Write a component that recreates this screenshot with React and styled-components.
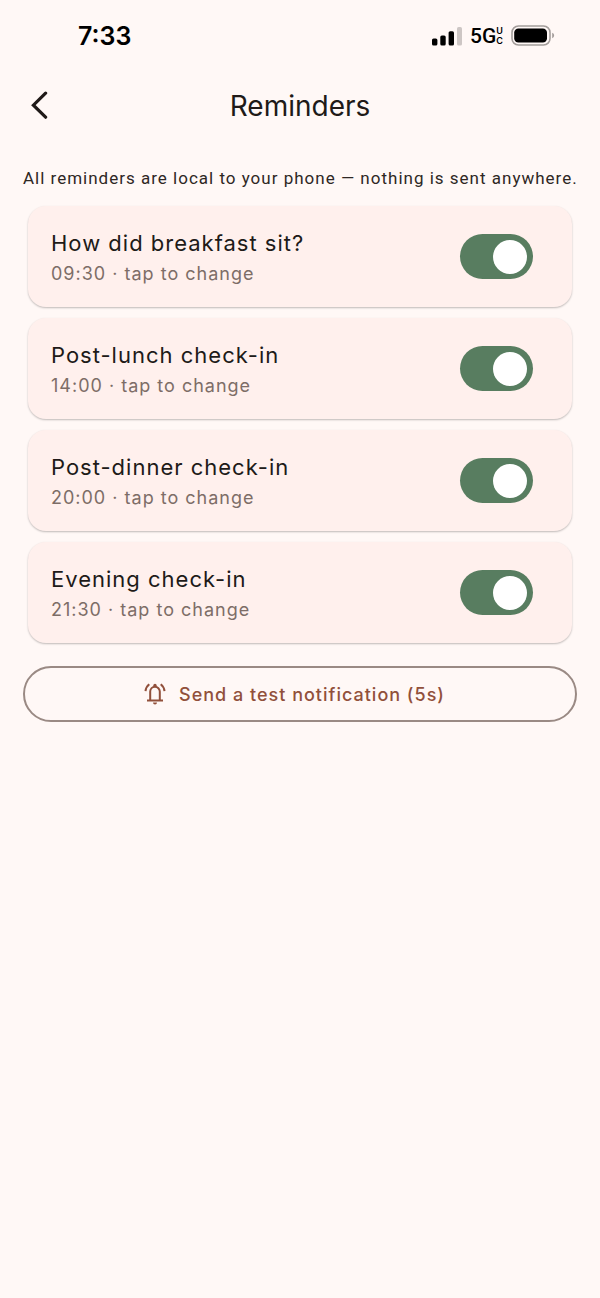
import { useState } from 'react';
import styled, { createGlobalStyle } from 'styled-components';

const initialReminders = [
  { id: 'breakfast', title: 'How did breakfast sit?', time: '09:30', enabled: true },
  { id: 'lunch', title: 'Post-lunch check-in', time: '14:00', enabled: true },
  { id: 'dinner', title: 'Post-dinner check-in', time: '20:00', enabled: true },
  { id: 'evening', title: 'Evening check-in', time: '21:30', enabled: true },
];

const SignalIcon = () => (
  <svg width="30" height="20" viewBox="0 0 30 20" aria-hidden="true">
    <rect x="0" y="12.5" width="5.4" height="7" rx="1.6" />
    <rect x="8.3" y="9.5" width="5.4" height="10" rx="1.6" />
    <rect x="16.6" y="5.2" width="5.4" height="14.3" rx="1.6" />
    <rect x="25" y="1" width="5" height="18.5" rx="1.6" fill="#cdc6c4" />
  </svg>
);

const BatteryIcon = () => (
  <svg width="44" height="22" viewBox="0 0 44 22" aria-hidden="true">
    <rect x="1" y="1" width="38" height="19" rx="6.5" fill="none" stroke="#a39d9b" strokeWidth="1.6" />
    <rect x="3.2" y="3.4" width="32.8" height="14.2" rx="4.2" />
    <path d="M41.2 7.8c1.2.5 1.9 1.5 1.9 2.7s-.7 2.2-1.9 2.7z" fill="#a39d9b" />
  </svg>
);

const BackIcon = () => (
  <svg width="18" height="30" viewBox="0 0 18 30" aria-hidden="true">
    <path
      d="M14.6 2.2 2.4 14.2l12.2 12"
      fill="none"
      stroke="#201a18"
      strokeWidth="3.2"
      strokeLinecap="round"
      strokeLinejoin="miter"
    />
  </svg>
);

const BellIcon = () => (
  <svg width="22" height="22" viewBox="0 0 22 22" aria-hidden="true">
    <g fill="none" stroke="currentColor" strokeWidth="2">
      <path d="M6.2 17V8.6a4.8 4.8 0 0 1 9.6 0V17" />
      <path d="M3 17.5h16" />
      <path d="M5.300 1.200C3.200 2.800 1.700 5.200 1.500 8.100M16.700 1.200c2.100 1.600 3.600 4 3.800 6.900" />
    </g>
    <circle cx="11" cy="2.500" r="1.700" fill="currentColor" />
    <path d="M9 19.400h4a2 2 0 0 1-4 0z" fill="currentColor" />
  </svg>
);

const ReminderCard = ({ reminder, onToggle }) => (
  <Card>
    <Details type="button">
      <ReminderTitle id={`${reminder.id}-title`}>{reminder.title}</ReminderTitle>
      <ReminderTime>{reminder.time} · tap to change</ReminderTime>
    </Details>
    <Switch
      type="checkbox"
      role="switch"
      aria-labelledby={`${reminder.id}-title`}
      checked={reminder.enabled}
      onChange={() => onToggle(reminder.id)}
    />
  </Card>
);

const App = () => {
  const [reminders, setReminders] = useState(initialReminders);

  const handleToggle = (id) => {
    setReminders((current) =>
      current.map((item) => (item.id === id ? { ...item, enabled: !item.enabled } : item))
    );
  };

  return (
    <>
      <GlobalStyle />
      <Screen>
        <StatusBar>
          <Clock>7:33</Clock>
          <StatusIcons>
            <SignalIcon />
            <Network>
              5G
              <NetworkSuffix>
                <span>U</span>
                <span>C</span>
              </NetworkSuffix>
            </Network>
            <BatteryIcon />
          </StatusIcons>
        </StatusBar>

        <AppBar>
          <BackButton type="button" aria-label="Back">
            <BackIcon />
          </BackButton>
          <PageTitle>Reminders</PageTitle>
        </AppBar>

        <Content>
          <Note>All reminders are local to your phone — nothing is sent anywhere.</Note>
          <ReminderList>
            {reminders.map((reminder) => (
              <ReminderCard key={reminder.id} reminder={reminder} onToggle={handleToggle} />
            ))}
          </ReminderList>
          <TestButton type="button">
            <BellIcon />
            Send a test notification (5s)
          </TestButton>
        </Content>
      </Screen>
    </>
  );
};

export default App;

// Styled Components
const GlobalStyle = createGlobalStyle`
  * {
    box-sizing: border-box;
  }

  body {
    margin: 0;
    background: #fff8f6;
    color: #201a18;
    font-family: Inter, "Liberation Sans", sans-serif;
  }

  button {
    padding: 0;
    border: none;
    background: none;
    color: inherit;
    font: inherit;
    cursor: pointer;
  }
`;

const Screen = styled.div`
  display: flex;
  flex-direction: column;
  min-height: 100vh;
`;

const StatusBar = styled.header`
  display: flex;
  align-items: center;
  justify-content: space-between;
  height: 72px;
  padding: 0 45px 0 78px;
  color: #000;
`;

const Clock = styled.span`
  font-size: 25px;
  font-weight: 600;
`;

const StatusIcons = styled.div`
  display: flex;
  align-items: center;
  gap: 8px;
`;

const Network = styled.span`
  display: flex;
  align-items: center;
  font-family: Roboto, sans-serif;
  font-size: 21px;
  font-weight: 500;
  line-height: 22px;
`;

const NetworkSuffix = styled.span`
  display: flex;
  flex-direction: column;
  font-family: Inter, sans-serif;
  font-size: 9px;
  font-weight: 600;
  line-height: 10px;
`;

const AppBar = styled.div`
  display: grid;
  grid-template-columns: 48px 1fr 48px;
  align-items: center;
  height: 68px;
  padding: 0 16px;
`;

const BackButton = styled.button`
  display: flex;
  align-items: center;
  justify-content: center;
  height: 48px;
`;

const PageTitle = styled.h1`
  margin: 0;
  font-size: 28px;
  font-weight: 400;
  line-height: 36px;
  text-align: center;
`;

const Content = styled.main`
  display: flex;
  flex-direction: column;
  padding: 26px 23px;
  letter-spacing: 1px;
`;

const Note = styled.p`
  margin: 0;
  color: #2e2724;
  font-family: Roboto, "Liberation Sans", sans-serif;
  font-size: 17px;
  line-height: 24px;
  white-space: nowrap;
`;

const ReminderList = styled.div`
  display: flex;
  flex-direction: column;
  gap: 11px;
  padding: 16px 5px 23px;
`;

const Card = styled.section`
  display: flex;
  align-items: center;
  justify-content: space-between;
  padding: 20px 39px 20px 23px;
  border-radius: 18px;
  background: #fff0ed;
  box-shadow: 0 1px 2px rgba(0, 0, 0, 0.25);
`;

const Details = styled.button`
  display: flex;
  flex-direction: column;
  align-items: flex-start;
  letter-spacing: inherit;
`;

const ReminderTitle = styled.span`
  font-size: 22px;
  line-height: 34px;
`;

const ReminderTime = styled.span`
  color: #7d6d67;
  font-size: 18px;
  line-height: 27px;
`;

const Switch = styled.input`
  display: flex;
  align-items: center;
  justify-content: ${(props) => (props.checked ? 'flex-end' : 'flex-start')};
  width: 73px;
  height: 45px;
  margin: 0;
  padding: 0 6px;
  border-radius: 23px;
  background: ${(props) => (props.checked ? '#587d60' : '#d8ccc8')};
  appearance: none;
  cursor: pointer;

  &::before {
    content: '';
    width: 34px;
    height: 34px;
    border-radius: 50%;
    background: #fff;
  }
`;

const TestButton = styled.button`
  && {
    display: flex;
    align-items: center;
    justify-content: center;
    gap: 13px;
    height: 56px;
    padding-right: 11px;
    border: 2px solid #9a8a84;
    border-radius: 28px;
    color: #91503b;
    font-size: 18px;
    font-weight: 500;
    letter-spacing: inherit;
  }
`;
